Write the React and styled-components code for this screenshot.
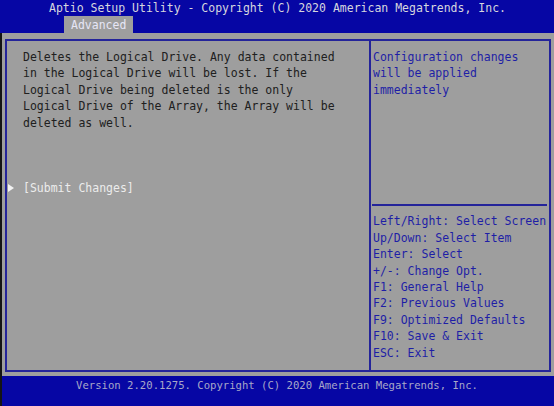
import React from 'react';
import styled, { createGlobalStyle } from 'styled-components';

const ROW = 16.45;

const GlobalStyle = createGlobalStyle`
  html, body {
    margin: 0;
    padding: 0;
    background: #0606a4;
  }
`;

const Screen = styled.div`
  width: 554px;
  height: 406px;
  display: flex;
  flex-direction: column;
  font-family: "DejaVu Sans Mono", "Liberation Mono", monospace;
  font-size: 11.5px;
  line-height: ${ROW}px;
  overflow: hidden;
`;

const Header = styled.header`
  height: 33px;
  background: #0606a4;
  display: flex;
  flex-direction: column;
`;

const Title = styled.div`
  color: #d6d6de;
  text-align: center;
  padding-left: 1px;
  height: 16px;
  line-height: 17px;
`;

const Tabs = styled.div`
  display: flex;
  padding-left: 64px;
  margin-top: auto;
`;

const Tab = styled.div`
  width: 69px;
  height: 17px;
  background: #9e9e9e;
  color: #e6e6f6;
  padding-left: 7px;
  box-sizing: border-box;
  line-height: 18px;
`;

const Body = styled.main`
  flex: 1;
  background: #9e9e9e;
  border-left: 2px solid #141414;
  padding: 6px 3px 4px 3px;
  display: flex;
`;

const Frame = styled.div`
  flex: 1;
  border: 2px solid #24249a;
  display: grid;
  grid-template-columns: 364px 1fr;
`;

const MainPanel = styled.section`
  border-right: 2px solid #24249a;
  padding: 7.8px 0 0 16px;
  color: #202020;
`;

const Line = styled.div`
  white-space: pre;
  height: ${ROW}px;
`;

const Item = styled.div`
  position: relative;
  margin-top: ${3 * ROW}px;
  color: #ececec;
  white-space: pre;
`;

const Pointer = styled.span`
  position: absolute;
  left: -15px;
  top: 4px;
  width: 0;
  height: 0;
  border-top: 4px solid transparent;
  border-bottom: 4px solid transparent;
  border-left: 6px solid #f2f2f2;
`;

const HelpPanel = styled.aside`
  padding: 7.8px 0 0 2px;
  color: #1e1ea6;
  display: flex;
  flex-direction: column;
`;

const Info = styled.div`
  height: ${9 * ROW}px;
`;

const Rule = styled.div`
  height: ${ROW}px;
  display: flex;
  align-items: center;
  margin: 0 2px 0 -1px;

  &::after {
    content: '';
    flex: 1;
    height: 2px;
    background: #24249a;
  }
`;

const Footer = styled.footer`
  height: 30px;
  background: #0606a4;
  border-left: 2px solid #141414;
  color: #a8a8c8;
  font-size: 10.6px;
  line-height: 19px;
  text-align: center;
  padding-right: 2px;
`;

const description = [
  'Deletes the Logical Drive. Any data contained',
  'in the Logical Drive will be lost. If the',
  'Logical Drive being deleted is the only',
  'Logical Drive of the Array, the Array will be',
  'deleted as well.',
];

const info = ['Configuration changes', 'will be applied', 'immediately'];

const keys = [
  'Left/Right: Select Screen',
  'Up/Down: Select Item',
  'Enter: Select',
  '+/-: Change Opt.',
  'F1: General Help',
  'F2: Previous Values',
  'F9: Optimized Defaults',
  'F10: Save & Exit',
  'ESC: Exit',
];

export default function App() {
  return (
    <>
      <GlobalStyle />
      <Screen>
        <Header>
          <Title>Aptio Setup Utility - Copyright (C) 2020 American Megatrends, Inc.</Title>
          <Tabs>
            <Tab>Advanced</Tab>
          </Tabs>
        </Header>
        <Body>
          <Frame>
            <MainPanel>
              {description.map((text) => (
                <Line key={text}>{text}</Line>
              ))}
              <Item>
                <Pointer />
                [Submit Changes]
              </Item>
            </MainPanel>
            <HelpPanel>
              <Info>
                {info.map((text) => (
                  <Line key={text}>{text}</Line>
                ))}
              </Info>
              <Rule />
              {keys.map((text) => (
                <Line key={text}>{text}</Line>
              ))}
            </HelpPanel>
          </Frame>
        </Body>
        <Footer>Version 2.20.1275. Copyright (C) 2020 American Megatrends, Inc.</Footer>
      </Screen>
    </>
  );
}
